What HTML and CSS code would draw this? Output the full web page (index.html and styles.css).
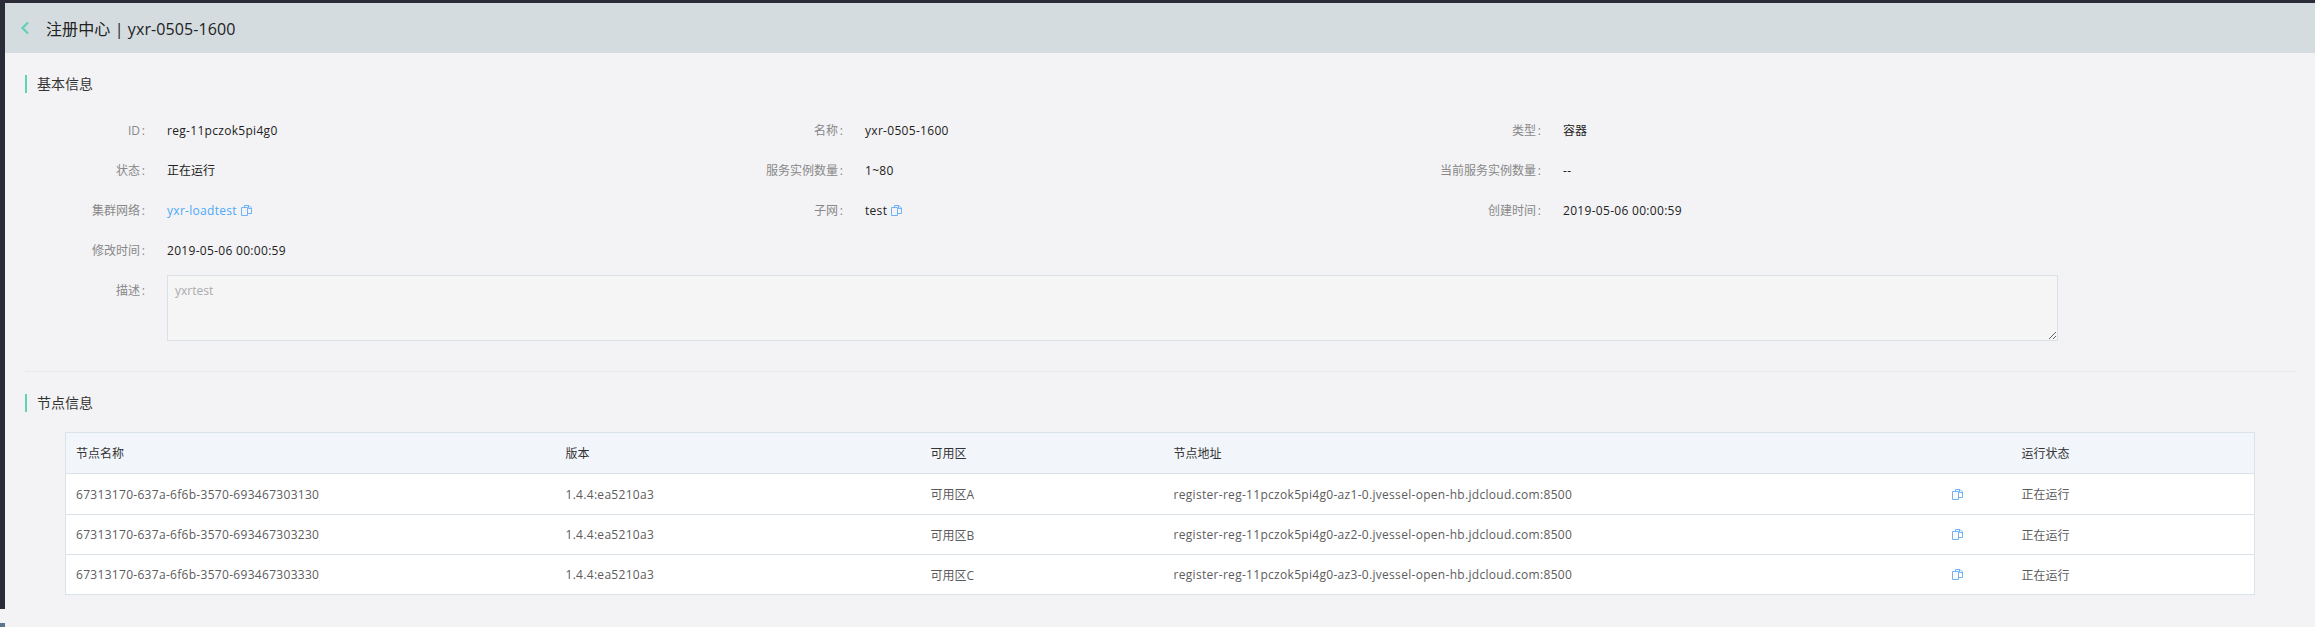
FILE: index.html
```html
<!DOCTYPE html>
<html lang="zh-CN">
<head>
    <meta charset="UTF-8">
    <title>注册中心</title>
    <link rel="stylesheet" href="styles.css">
</head>
<body>
    <svg width="0" height="0" class="icon-defs">
        <symbol id="copy" viewBox="0 0 11 11">
            <path d="M.5 2.5h6v8h-6z M3.5 2.5V.5h4.5l2.500 2.500v5.500h-4 M7.500 .5V3.500h3" fill="none" stroke="currentColor" stroke-width="1"/>
        </symbol>
    </svg>
    <div class="side-tab"></div>
    <div class="page">
        <div class="page-header">
            <svg class="back" width="10" height="14" viewBox="0 0 10 14"><path d="M8 1.500 2.500 7 8 12.500" fill="none" stroke="#5fd3b3" stroke-width="2.200"/></svg>
            <span class="page-title">注册中心 | yxr-0505-1600</span>
        </div>

        <div class="section-title first">基本信息</div>
        <div class="info-grid">
            <div class="info-item"><label>ID<i>:</i></label><span>reg-11pczok5pi4g0</span></div>
            <div class="info-item"><label>名称<i>:</i></label><span>yxr-0505-1600</span></div>
            <div class="info-item"><label>类型<i>:</i></label><span class="zh">容器</span></div>
            <div class="info-item"><label>状态<i>:</i></label><span class="zh">正在运行</span></div>
            <div class="info-item"><label>服务实例数量<i>:</i></label><span>1~80</span></div>
            <div class="info-item"><label>当前服务实例数量<i>:</i></label><span>--</span></div>
            <div class="info-item"><label>集群网络<i>:</i></label><span><a class="link">yxr-loadtest</a><svg class="copy"><use href="#copy"/></svg></span></div>
            <div class="info-item"><label>子网<i>:</i></label><span>test<svg class="copy"><use href="#copy"/></svg></span></div>
            <div class="info-item"><label>创建时间<i>:</i></label><span>2019-05-06 00:00:59</span></div>
            <div class="info-item"><label>修改时间<i>:</i></label><span>2019-05-06 00:00:59</span></div>
        </div>
        <div class="desc-row">
            <label>描述<i>:</i></label>
            <textarea class="desc" disabled>yxrtest</textarea>
        </div>

        <div class="divider"></div>

        <div class="section-title">节点信息</div>
        <table class="node-table">
            <thead>
                <tr>
                    <th class="col-name">节点名称</th>
                    <th class="col-version">版本</th>
                    <th class="col-az">可用区</th>
                    <th class="col-addr">节点地址</th>
                    <th class="col-copy"></th>
                    <th>运行状态</th>
                </tr>
            </thead>
            <tbody>
                <tr>
                    <td>67313170-637a-6f6b-3570-693467303130</td>
                    <td>1.4.4:ea5210a3</td>
                    <td class="zh">可用区A</td>
                    <td>register-reg-11pczok5pi4g0-az1-0.jvessel-open-hb.jdcloud.com:8500</td>
                    <td><svg class="copy"><use href="#copy"/></svg></td>
                    <td class="zh">正在运行</td>
                </tr>
                <tr>
                    <td>67313170-637a-6f6b-3570-693467303230</td>
                    <td>1.4.4:ea5210a3</td>
                    <td class="zh">可用区B</td>
                    <td>register-reg-11pczok5pi4g0-az2-0.jvessel-open-hb.jdcloud.com:8500</td>
                    <td><svg class="copy"><use href="#copy"/></svg></td>
                    <td class="zh">正在运行</td>
                </tr>
                <tr>
                    <td>67313170-637a-6f6b-3570-693467303330</td>
                    <td>1.4.4:ea5210a3</td>
                    <td class="zh">可用区C</td>
                    <td>register-reg-11pczok5pi4g0-az3-0.jvessel-open-hb.jdcloud.com:8500</td>
                    <td><svg class="copy"><use href="#copy"/></svg></td>
                    <td class="zh">正在运行</td>
                </tr>
            </tbody>
        </table>
    </div>
</body>
</html>
```
FILE: styles.css
```css
html, body {
    height: 100%;
}

body {
    margin: 0;
    padding: 3px 0 0 5px;
    box-sizing: border-box;
    overflow: hidden;
    background-color: #2a2c38;
    font-family: "Open Sans", "Noto Sans CJK SC", sans-serif;
    font-size: 12px;
    color: #333;
}

.icon-defs {
    position: absolute;
}

/* bit of the side menu showing at the bottom left */
.side-tab {
    position: absolute;
    left: 0;
    top: 609px;
    width: 5px;
    height: 14px;
    background-color: #f3f3f5;
    border-bottom: 4px solid #5f738c;
}

.page {
    height: 100%;
    background-color: #f3f3f5;
}

.page-header {
    display: flex;
    align-items: center;
    height: 50px;
    padding-left: 15px;
    background-color: #d4dce0;
}

.back {
    margin-right: 16px;
}

.page-title {
    font-size: 16px;
    letter-spacing: .1px;
    color: #222;
}

.section-title {
    margin: 0 0 0 20px;
    padding-left: 10px;
    height: 18px;
    line-height: 18px;
    border-left: 2px solid #5fd3b3;
    font-size: 14px;
    color: #333;
}

.section-title.first {
    margin-top: 22px;
}

.info-grid {
    display: grid;
    grid-template-columns: repeat(3, 698px);
    grid-auto-rows: 40px;
    margin-top: 17px;
}

.info-item {
    display: flex;
    align-items: center;
}

.info-item label,
.desc-row label {
    width: 140px;
    text-align: right;
    color: #888;
}

label i {
    display: inline-block;
    width: 5px;
    font-style: normal;
}

.info-item span {
    display: flex;
    align-items: center;
    margin-left: 22px;
    letter-spacing: .3px;
    color: #222;
}

.info-item span.zh,
.node-table td.zh {
    letter-spacing: 0;
}

.link {
    color: #4ba9f8;
}

.copy {
    width: 11px;
    height: 11px;
    margin-left: 4px;
    color: #6fb3f7;
}

.desc-row {
    display: flex;
    margin-top: 5px;
    line-height: 18px;
}

.desc-row label {
    padding-top: 7px;
}

.desc {
    width: 1891px;
    height: 66px;
    box-sizing: border-box;
    margin: 0 0 0 22px;
    padding: 6px 7px;
    border: 1px solid #d9e1e6;
    background-color: #f5f5f6;
    font-family: inherit;
    font-size: 12px;
    color: #aaa;
}

.divider {
    margin: 30px 0 22px 20px;
    width: 2270px;
    border-top: 1px dotted #dcdee0;
}

.node-table {
    width: 2190px;
    margin: 20px 0 0 60px;
    border-collapse: collapse;
    table-layout: fixed;
    background-color: #fff;
    color: #5c5c5c;
}

.node-table th,
.node-table td {
    box-sizing: border-box;
    height: 40px;
    padding: 0 0 0 10px;
    border: solid #dbe3ea;
    border-width: 1px 0;
    text-align: left;
    font-weight: normal;
    letter-spacing: .3px;
}

.node-table th,
.node-table tbody tr:first-child td {
    height: 41px;
}

.node-table tr > :first-child {
    border-left-width: 1px;
}

.node-table tr > :last-child {
    border-right-width: 1px;
}

.node-table th {
    background-color: #f2f6fb;
    color: #333;
    letter-spacing: 0;
}

.node-table .copy {
    margin-left: 0;
    display: block;
}

.col-name {
    width: 490px;
}

.col-version {
    width: 365px;
}

.col-az {
    width: 243px;
}

.col-addr {
    width: 778px;
}

.col-copy {
    width: 70px;
}
```
